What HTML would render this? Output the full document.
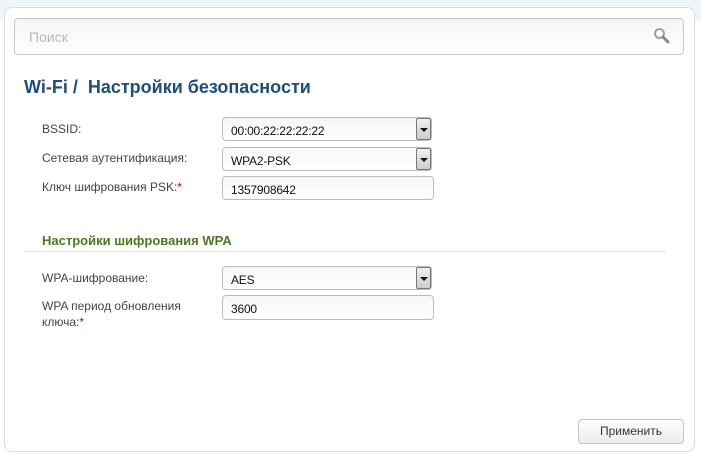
<!DOCTYPE html>
<html><head><meta charset="utf-8"><style>
body{margin:0;width:701px;height:457px;background:#fff;font-family:"Liberation Sans",Arial,sans-serif;position:relative;overflow:hidden}
.top{position:absolute;left:0;top:0;width:701px;height:20px;background:#eef6fb}
.panel{position:absolute;left:4px;top:7px;width:689px;height:443px;border:1px solid #dcdcdc;border-radius:8px;background:#fff}
.search{position:absolute;left:14px;top:18px;width:668px;height:35px;border:1px solid #c8c8c8;border-radius:4px;background:linear-gradient(#f4f4f4,#fff)}
.search span{position:absolute;left:14px;top:10px;font-size:14px;color:#b8b8b8}
h1{position:absolute;left:24px;top:77px;margin:0;font-size:18px;font-weight:bold;color:#1a4f7f}
.lbl{position:absolute;left:42px;font-size:12px;color:#444}
.lbl i{color:#c00;font-style:normal}
.f{position:absolute;left:222px;width:210px;height:24px;border:1px solid #bbb;border-radius:4px;background:linear-gradient(#f6f6f6,#fff);box-sizing:border-box;font-size:12px;color:#111;padding:6px 0 0 8px;letter-spacing:-0.2px}
.arr{position:absolute;right:0;top:0;width:15px;height:22px;border:1px solid #777;border-radius:2px;background:linear-gradient(#f0f0f0,#ccc);box-sizing:border-box}
.arr:after{content:"";position:absolute;left:3px;top:9px;border-left:4px solid transparent;border-right:4px solid transparent;border-top:4px solid #111}
h2{position:absolute;left:42px;top:233px;margin:0;font-size:13px;font-weight:bold;color:#4a7a1c}
.line{position:absolute;left:24px;top:251px;width:642px;height:1px;background:#e2e2e2}
.btn{position:absolute;left:578px;top:419px;width:106px;height:25px;border:1px solid #c4c4c4;border-radius:4px;background:linear-gradient(#fff,#ececec);box-sizing:border-box;font-size:12px;color:#333;text-align:center;line-height:23px}
</style></head><body>
<div class="top"></div>
<div class="panel"></div>
<div class="search"><span>Поиск</span>
<svg style="position:absolute;left:638px;top:8px" width="18" height="18" viewBox="0 0 18 18"><circle cx="6.5" cy="6.5" r="4.5" fill="none" stroke="#999" stroke-width="1.8"/><line x1="10" y1="10" x2="15" y2="15" stroke="#888" stroke-width="3" stroke-linecap="round"/></svg></div>
<h1>Wi-Fi /&nbsp; Настройки безопасности</h1>
<div class="lbl" style="top:122px">BSSID:</div>
<div class="f" style="top:117px">00:00:22:22:22:22<div class="arr"></div></div>
<div class="lbl" style="top:151px">Сетевая аутентификация:</div>
<div class="f" style="top:147px">WPA2-PSK<div class="arr"></div></div>
<div class="lbl" style="top:180px">Ключ шифрования PSK:<i>*</i></div>
<div class="f" style="top:176px;width:212px">1357908642</div>
<h2>Настройки шифрования WPA</h2>
<div class="line"></div>
<div class="lbl" style="top:271px">WPA-шифрование:</div>
<div class="f" style="top:266px">AES<div class="arr"></div></div>
<div class="lbl" style="top:298px;line-height:16px">WPA период обновления<br>ключа:<i>*</i></div>
<div class="f" style="top:295px;width:212px;height:25px">3600</div>
<div class="btn">Применить</div>
</body></html>
